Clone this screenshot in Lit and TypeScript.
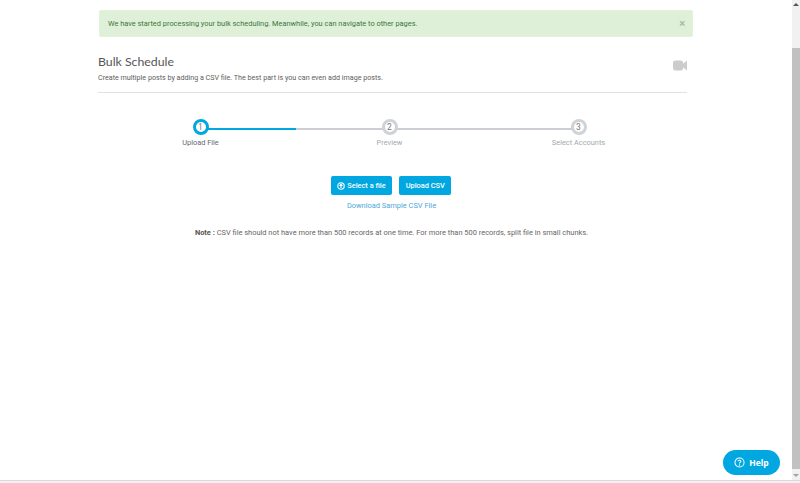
import { LitElement, html, css } from "lit";
import { customElement } from "lit/decorators.js";

@customElement("app-root")
export class AppRoot extends LitElement {
  static styles = css`
    :host { display: block; position: relative; width: 800px; height: 483px; overflow: hidden; background: #fff; font-family: Roboto, sans-serif; color: #666; }
    .layout { display: flex; height: 480px; }
    .page { flex: 1; padding: 10px 99px 0 99px; min-width: 0; }
    .alert { display: flex; justify-content: space-between; align-items: center; height: 27px; padding: 0 7px 0 8px; background: #dff0d8; border: 1px solid #e3f1db; border-radius: 2px; color: #3c763d; font-size: 7.4px; box-sizing: border-box; }
    .close { color: #a9b8a5; font-size: 11px; font-weight: 700; line-height: 1; }
    .head { display: flex; justify-content: space-between; margin: 16px 6px 0 -1px; padding-bottom: 9px; border-bottom: 1px solid #e2e2e2; height: 30px; }
    h1 { margin: 0; font: 400 12.3px/18px Lato, sans-serif; color: #555; }
    .sub { margin: 1px 0 0; font-size: 7.15px; line-height: 12px; color: #5d5d5d; }
    .cam { margin: 7px 0 0 0; }
    .steps { display: grid; grid-template-columns: repeat(3, 189px); justify-content: center; margin: 26px 0 0 -13px; }
    .step { position: relative; display: flex; flex-direction: column; align-items: center; gap: 3px; font-size: 7.4px; color: #a3a9ae; }
    .step.on { color: #5f6b73; }
    .dot { position: relative; z-index: 1; box-sizing: border-box; width: 16px; height: 16px; border: 3px solid #cfd2d6; border-radius: 50%; background: #fff; display: flex; align-items: center; justify-content: center; font-size: 8.5px; color: #777; }
    .on .dot { border-color: #00a7e1; }
    .line { position: absolute; top: 8.5px; left: 50%; width: 100%; height: 2.5px; background: #cbced2; }
    .on .line { background: linear-gradient(90deg, #00a7e1 50%, #cbced2 50%); }
    .actions { display: flex; justify-content: center; gap: 7px; margin: 29px 0 0 -10px; }
    .btn { display: flex; align-items: center; gap: 2px; height: 19px; padding: 0 6.5px; background: #00a7e1; color: #fff; border-radius: 2px; font-size: 7.4px; font-weight: 500; box-sizing: border-box; }
    .dl { margin: 5px 0 0 -9px; text-align: center; font-size: 7.45px; line-height: 12px; color: #4ba8dc; }
    .note { margin: 15px 0 0 -9px; text-align: center; font-size: 7.45px; line-height: 12px; color: #666; }
    .note b { font-weight: 700; color: #555; }
    .bar { position: relative; width: 8px; background: #f1f1f1; }
    .thumb { position: absolute; left: 0; right: 0; top: 48px; bottom: 11px; background: #c1c1c1; }
    .up, .down { position: absolute; left: 1px; width: 0; height: 0; border-left: 3px solid transparent; border-right: 3px solid transparent; }
    .up { top: 3px; border-bottom: 3px solid #555; }
    .down { bottom: 3px; border-top: 3px solid #a3a3a3; }
    .hbar { height: 3px; background: #f1f1f1; border-top: 1px solid #d9d9d9; box-sizing: border-box; }
    .help { position: absolute; left: 723px; top: 450px; width: 57px; height: 25px; border-radius: 13px; background: #00a7e1; color: #fff; display: flex; align-items: center; justify-content: center; gap: 4px; font: 700 8.5px "Open Sans", sans-serif; }
  `;

  render() {
    return html`
      <div class="layout">
        <div class="page">
          <div class="alert"><span>We have started processing your bulk scheduling. Meanwhile, you can navigate to other pages.</span><span class="close">×</span></div>
          <div class="head">
            <div>
              <h1>Bulk Schedule</h1>
              <p class="sub">Create multiple posts by adding a CSV file. The best part is you can even add image posts.</p>
            </div>
            <svg class="cam" width="14" height="11" viewBox="0 0 14 11"><rect y="0.5" width="10" height="10" rx="2.5" fill="#ccc"/><path d="M9 4.5 14 0.5V10.5L9 6.5Z" fill="#ccc"/></svg>
          </div>
          <div class="steps">
            <div class="step on"><span class="line"></span><span class="dot">1</span>Upload File</div>
            <div class="step"><span class="line"></span><span class="dot">2</span>Preview</div>
            <div class="step"><span class="dot">3</span>Select Accounts</div>
          </div>
          <div class="actions">
            <span class="btn"><svg width="8" height="8" viewBox="0 0 8 8"><circle cx="4" cy="4" r="3.2" fill="none" stroke="#fff" stroke-width="1.1"/><path d="M4 6V2.4M2.6 3.8 4 2.2 5.4 3.8" fill="none" stroke="#fff" stroke-width="1.1"/></svg>Select a file</span>
            <span class="btn">Upload CSV</span>
          </div>
          <div class="dl">Download Sample CSV File</div>
          <div class="note"><b>Note :</b> CSV file should not have more than 500 records at one time. For more than 500 records, split file in small chunks.</div>
        </div>
        <div class="bar"><span class="up"></span><span class="thumb"></span><span class="down"></span></div>
      </div>
      <div class="hbar"></div>
      <div class="help"><svg width="11" height="11" viewBox="0 0 13 13"><circle cx="6.5" cy="6.5" r="5.4" fill="none" stroke="#fff" stroke-width="1.2"/><path d="M4.8 5.1C4.9 3.2 8.2 3.3 8.2 5.1 8.2 6.3 6.5 6.3 6.5 7.6" fill="none" stroke="#fff" stroke-width="1.2"/><circle cx="6.5" cy="9.4" r=".8" fill="#fff"/></svg>Help</div>
    `;
  }
}
